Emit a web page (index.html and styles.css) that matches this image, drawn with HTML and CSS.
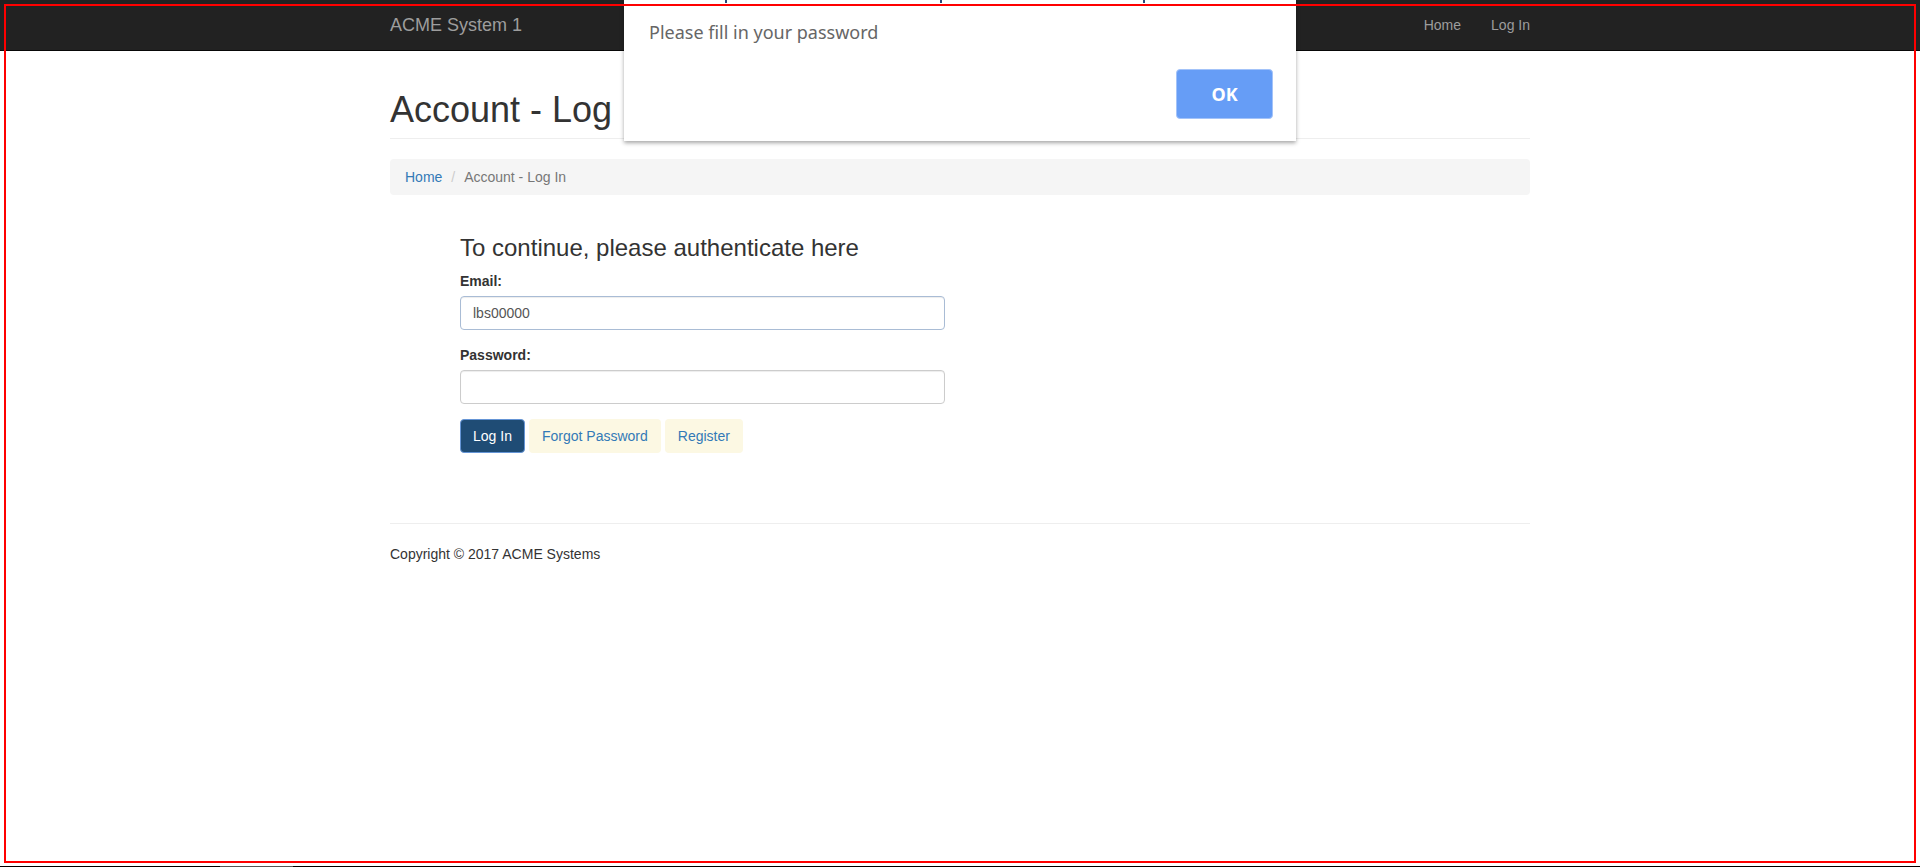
FILE: index.html
```html
<!DOCTYPE html>
<html lang="en">
<head>
<meta charset="utf-8">
<title>Account - Log In - ACME System 1</title>
<link rel="stylesheet" href="styles.css">
</head>
<body>
<nav class="navbar">
  <div class="container navbar-inner">
    <a class="brand" href="#">ACME System 1</a>
    <ul class="nav">
      <li><a href="#">Home</a></li>
      <li><a href="#">Log In</a></li>
    </ul>
  </div>
</nav>

<main class="container body-content">
  <div class="page-header">
    <h1>Account - Log In</h1>
  </div>

  <ol class="breadcrumb">
    <li><a href="#">Home</a></li>
    <li class="active">Account - Log In</li>
  </ol>

  <section class="login">
    <h3>To continue, please authenticate here</h3>
    <form>
      <div class="form-group">
        <label for="email">Email:</label>
        <input id="email" class="form-control email" type="text" value="lbs00000">
      </div>
      <div class="form-group">
        <label for="password">Password:</label>
        <input id="password" class="form-control" type="password" value="">
      </div>
      <div class="actions">
        <button type="button" class="btn btn-primary">Log In</button>
        <a class="btn btn-soft" href="#">Forgot Password</a>
        <a class="btn btn-soft" href="#">Register</a>
      </div>
    </form>
  </section>

  <hr class="footer-rule">
  <footer>
    <p>Copyright © 2017 ACME Systems</p>
  </footer>
</main>

<div class="alert-dialog" role="alertdialog">
  <span class="clip-mark m1"></span>
  <span class="clip-mark m2"></span>
  <span class="clip-mark m3"></span>
  <p class="alert-message">Please fill in your password</p>
  <div class="alert-actions">
    <button type="button" class="alert-ok">OK</button>
  </div>
</div>

<div class="capture-frame"></div>
<div class="bottom-edge"><span class="bottom-thumb"></span></div>
</body>
</html>
```

FILE: styles.css
```css
* {
  box-sizing: border-box;
}

html,
body {
  margin: 0;
  padding: 0;
}

body {
  font-family: "Liberation Sans", Arial, Helvetica, sans-serif;
  font-size: 14px;
  line-height: 20px;
  color: #333;
  background: #fff;
}

a {
  color: #337ab7;
  text-decoration: none;
}

.container {
  width: 1140px;
  margin: 0 auto;
}

/* Navbar */
.navbar {
  height: 51px;
  background: #222;
  border-bottom: 1px solid #080808;
}

.navbar-inner {
  display: flex;
  justify-content: space-between;
  align-items: flex-start;
}

.brand {
  display: block;
  padding: 15px 0;
  font-size: 18px;
  line-height: 20px;
  color: #9d9d9d;
}

.nav {
  list-style: none;
  display: flex;
  margin: 0 -15px 0 0;
  padding: 0;
}

.nav a {
  display: block;
  padding: 15px;
  line-height: 20px;
  color: #9d9d9d;
}

/* Page header */
.page-header {
  margin-top: 39px;
  padding-bottom: 8px;
  border-bottom: 1px solid #eee;
}

.page-header h1 {
  margin: 0;
  font-size: 36px;
  line-height: 40px;
  font-weight: 400;
  color: #333;
}

/* Breadcrumb */
.breadcrumb {
  list-style: none;
  display: flex;
  margin: 20px 0;
  padding: 8px 15px;
  background: #f5f5f5;
  border-radius: 4px;
}

.breadcrumb li + li::before {
  content: "/\00a0";
  padding: 0 5px;
  margin-left: 4px;
  color: #ccc;
}

.breadcrumb .active {
  color: #777;
}

/* Login */
.login {
  width: 485px;
  margin-left: 70px;
  padding-top: 20px;
  padding-bottom: 50px;
}

.login h3 {
  margin: 0 0 10px;
  font-size: 24px;
  line-height: 26.4px;
  font-weight: 400;
  color: #333;
}

.login form {
  margin: 0;
}

.form-group {
  margin-bottom: 15px;
}

.form-group label {
  display: inline-block;
  margin-bottom: 5px;
  font-weight: 700;
}

.form-control {
  display: block;
  width: 100%;
  height: 34px;
  padding: 6px 12px;
  font-family: "Liberation Sans", Arial, Helvetica, sans-serif;
  font-size: 14px;
  line-height: 20px;
  color: #555;
  background: #fff;
  border: 1px solid #ccc;
  border-radius: 4px;
  box-shadow: inset 0 1px 1px rgba(0, 0, 0, 0.075);
}

.form-control.email {
  border-color: #a9bcd5;
}

.actions {
  display: flex;
  gap: 4px;
}

.btn {
  display: inline-block;
  height: 34px;
  padding: 6px 12px;
  font-family: "Liberation Sans", Arial, Helvetica, sans-serif;
  font-size: 14px;
  line-height: 20px;
  border: 1px solid transparent;
  border-radius: 4px;
  white-space: nowrap;
  cursor: pointer;
}

.btn-primary {
  background: #1f4c75;
  color: #fff;
  border-color: #6595d6;
}

.btn-soft {
  background: #fcf8e3;
  color: #337ab7;
}

/* Footer */
.footer-rule {
  height: 0;
  margin: 20px 0;
  border: 0;
  border-top: 1px solid #eee;
}

footer p {
  margin: 0 0 10px;
}

/* Alert dialog overlay */
.alert-dialog {
  position: absolute;
  top: 0;
  left: 624px;
  width: 672px;
  padding: 20px 23px 22px 25px;
  background: #fff;
  box-shadow: 0 2px 4px rgba(0, 0, 0, 0.35);
  font-family: "Noto Sans", "Open Sans", sans-serif;
  z-index: 5;
}

.alert-message {
  margin: 0;
  font-size: 18px;
  line-height: 24px;
  color: #666;
}

.alert-actions {
  display: flex;
  justify-content: flex-end;
  margin-top: 25px;
}

.alert-ok {
  width: 97px;
  height: 50px;
  padding: 0;
  background: #669df6;
  border: 1px solid #a3c3f9;
  border-radius: 4px;
  color: #fff;
  font-family: "Noto Sans", "Open Sans", sans-serif;
  font-size: 18px;
  font-weight: 700;
}

.clip-mark {
  position: absolute;
  top: 0;
  width: 2px;
  height: 3px;
  background: #2b4a78;
}

.m1 { left: 101px; }
.m2 { left: 316px; }
.m3 { left: 519px; }

/* Screenshot frame overlays */
.capture-frame {
  position: fixed;
  left: 4px;
  top: 4px;
  width: 1912px;
  height: 859px;
  border: 2px solid #f00;
  pointer-events: none;
  z-index: 10;
}

.bottom-edge {
  position: fixed;
  left: 0;
  right: 0;
  bottom: 0;
  height: 1px;
  background: #000;
  z-index: 10;
}

.bottom-thumb {
  position: absolute;
  left: 220px;
  top: 0;
  width: 73px;
  height: 1px;
  background: #555;
}
```
